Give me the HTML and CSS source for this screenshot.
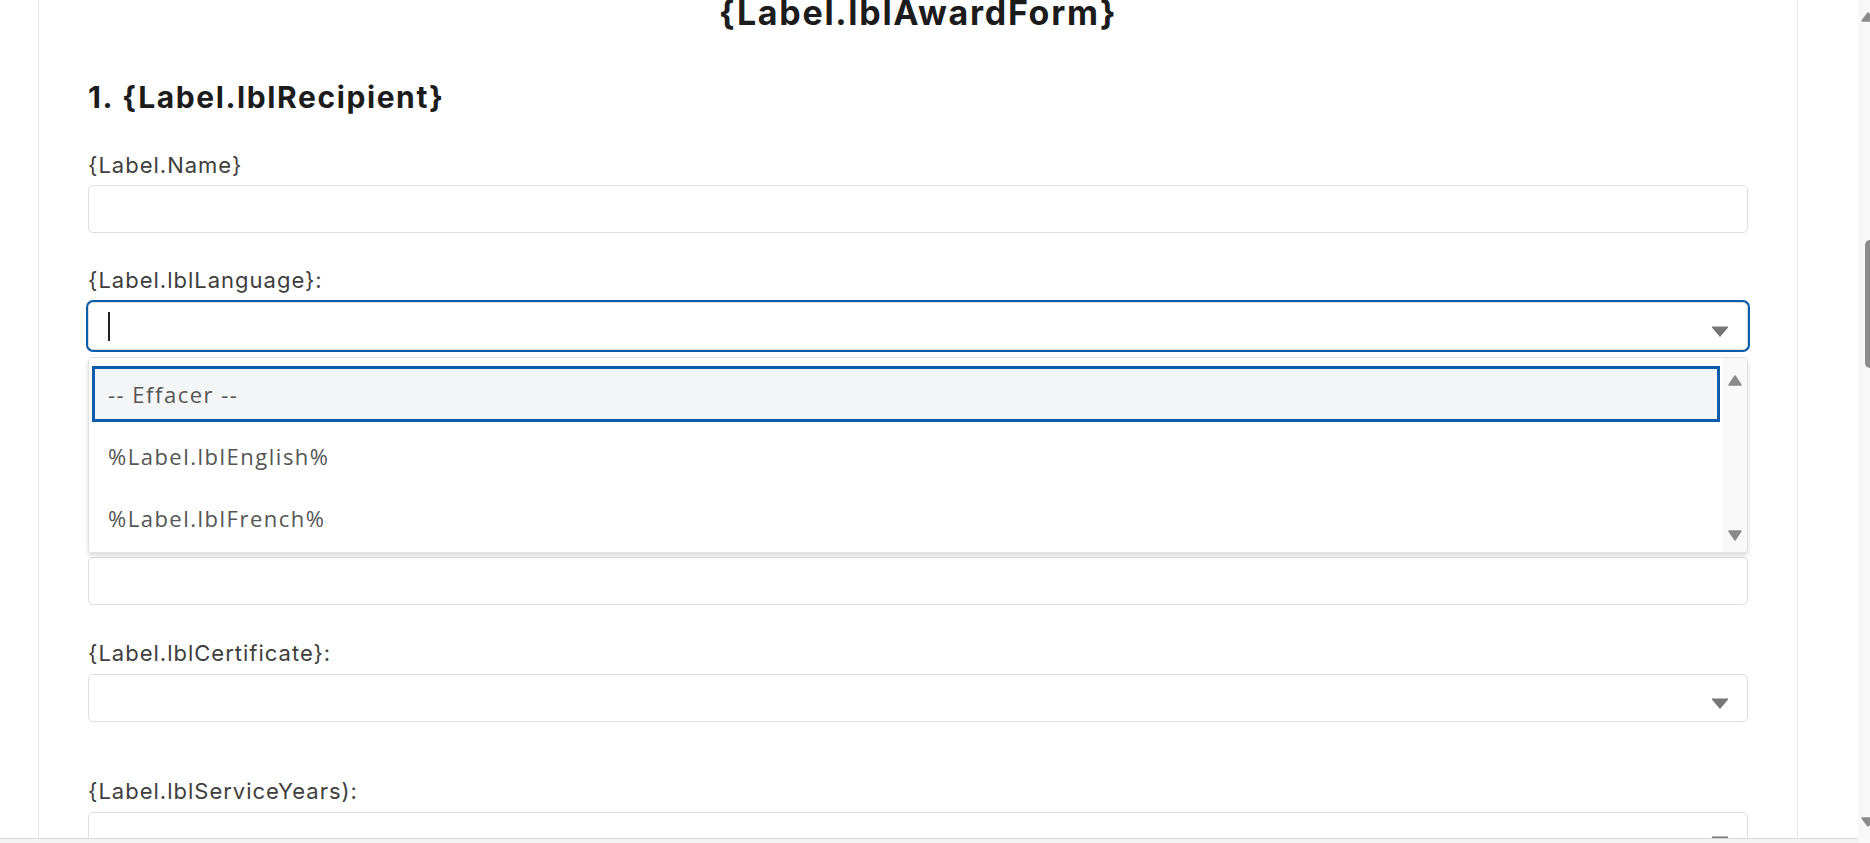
FILE: index.html
```html
<!DOCTYPE html>
<html lang="fr">
<head>
<meta charset="utf-8">
<title>{Label.lblAwardForm}</title>
<link rel="stylesheet" href="styles.css">
</head>
<body>
<div class="page">
  <h1 class="title">{Label.lblAwardForm}</h1>
  <h2 class="section">1. {Label.lblRecipient}</h2>

  <div class="group g-name">
    <label class="lbl">{Label.Name}</label>
    <div class="field"></div>
  </div>

  <div class="group g-lang">
    <label class="lbl">{Label.lblLanguage}:</label>
    <div class="combo">
      <div class="field select focused">
        <span class="caret"></span>
        <svg class="arrow" width="18" height="11" viewBox="0 0 18 11"><polygon points="1,1 17,1 9,10.5" fill="#767676" stroke="#767676" stroke-width="1" stroke-linejoin="round"/></svg>
      </div>
      <div class="menu">
        <div class="options">
          <div class="opt active">-- Effacer --</div>
          <div class="opt">%Label.lblEnglish%</div>
          <div class="opt">%Label.lblFrench%</div>
        </div>
        <div class="menu-scroll">
          <svg width="14" height="11" viewBox="0 0 14 11"><polygon points="7,1 13,10 1,10" fill="#8a8a8a" stroke="#8a8a8a" stroke-width="1.5" stroke-linejoin="round"/></svg>
          <svg width="14" height="11" viewBox="0 0 14 11"><polygon points="1,1 13,1 7,10" fill="#8a8a8a" stroke="#8a8a8a" stroke-width="1.5" stroke-linejoin="round"/></svg>
        </div>
      </div>
    </div>
  </div>

  <div class="group g-hidden">
    <div class="field"></div>
  </div>

  <div class="group g-cert">
    <label class="lbl">{Label.lblCertificate}:</label>
    <div class="field select">
      <svg class="arrow" width="18" height="11" viewBox="0 0 18 11"><polygon points="1,1 17,1 9,10.5" fill="#767676" stroke="#767676" stroke-width="1" stroke-linejoin="round"/></svg>
    </div>
  </div>

  <div class="group g-years">
    <label class="lbl">{Label.lblServiceYears):</label>
    <div class="field select">
      <svg class="arrow" width="18" height="11" viewBox="0 0 18 11"><polygon points="1,1 17,1 9,10.5" fill="#767676" stroke="#767676" stroke-width="1" stroke-linejoin="round"/></svg>
    </div>
  </div>
</div>

<div class="vscroll">
  <svg class="vs-up" width="14" height="10" viewBox="0 0 14 10"><polygon points="7,1 13,9 1,9" fill="#8a8a8a" stroke="#8a8a8a" stroke-width="1.5" stroke-linejoin="round"/></svg>
  <div class="vs-thumb"></div>
  <svg class="vs-down" width="14" height="10" viewBox="0 0 14 10"><polygon points="1,1 13,1 7,9" fill="#8a8a8a" stroke="#8a8a8a" stroke-width="1.5" stroke-linejoin="round"/></svg>
</div>
<div class="hscroll"></div>
</body>
</html>
```

FILE: styles.css
```css
html, body {
  margin: 0;
  padding: 0;
  height: 100%;
  overflow: hidden;
  background: #ffffff;
}

body {
  font-family: "Inter", "Liberation Sans", sans-serif;
  color: #3e3e3c;
}

.page {
  box-sizing: border-box;
  width: 1760px;
  min-height: 900px;
  margin-left: 38px;
  padding: 0 49px;
  border-left: 1px solid #e6e6e6;
  border-right: 1px solid #e6e6e6;
}

.title {
  margin: -7px 0 0;
  font-size: 34px;
  line-height: 40px;
  font-weight: 700;
  letter-spacing: 1.7px;
  text-align: center;
  color: #1c1c1c;
}

.section {
  margin: 46px 0 0;
  font-size: 30px;
  line-height: 36px;
  font-weight: 700;
  letter-spacing: 1.6px;
  color: #1c1c1c;
}

.group {
  display: flex;
  flex-direction: column;
}

.lbl {
  display: block;
  font-size: 22px;
  line-height: 24px;
  letter-spacing: 1px;
  color: #3e3e3c;
}

.g-name { margin-top: 38px; }
.g-name .lbl { margin-bottom: 8px; }

.g-lang { margin-top: 35px; }
.g-lang .lbl { margin-bottom: 10px; }

.g-hidden { margin-top: 207px; }

.g-cert { margin-top: 36px; }
.g-cert .lbl { margin-bottom: 9px; }

.g-years { margin-top: 57px; }
.g-years .lbl { margin-bottom: 9px; }

.field {
  box-sizing: border-box;
  height: 48px;
  border: 1px solid #dedede;
  border-radius: 5px;
  background: #ffffff;
}

.select {
  display: flex;
  align-items: center;
  justify-content: space-between;
  padding: 10px 18px 0 19px;
}

.select .arrow {
  margin-left: auto;
  display: block;
}

.focused {
  box-shadow: 0 0 0 2px #0b5cab;
  border-color: #dcdcdc;
}

.caret {
  display: block;
  width: 2px;
  height: 29px;
  margin-top: -10px;
  background: #222222;
}

.combo {
  position: relative;
}

.menu {
  position: absolute;
  top: 55px;
  left: 0;
  right: 0;
  z-index: 5;
  box-sizing: border-box;
  height: 196px;
  display: flex;
  border: 1px solid #e2e2e2;
  border-radius: 4px;
  background: #ffffff;
  box-shadow: 0 3px 5px rgba(0, 0, 0, 0.14);
  overflow: hidden;
}

.options {
  flex: 1;
  display: flex;
  flex-direction: column;
  padding: 5px 0 3px;
}

.opt {
  box-sizing: border-box;
  height: 56px;
  margin: 3px 3px 3px 3px;
  padding-left: 13px;
  border: 3px solid transparent;
  display: flex;
  align-items: center;
  font-family: "Open Sans", "Liberation Sans", sans-serif;
  font-size: 22px;
  letter-spacing: 1.5px;
  color: #555555;
}

.opt.active {
  border-color: #0b5cab;
  background: #f4f5f7;
}

.menu-scroll {
  width: 24px;
  display: flex;
  flex-direction: column;
  align-items: center;
  justify-content: space-between;
  padding: 17px 0 11px;
  background: #f9f9f9;
}

.menu-scroll svg { display: block; }

.vscroll {
  position: fixed;
  top: 0;
  right: 0;
  bottom: 0;
  width: 12px;
  background: #f8f8f8;
}

.vs-up {
  position: absolute;
  top: 12px;
  left: 3px;
}

.vs-down {
  position: absolute;
  top: 817px;
  left: 3px;
}

.vs-thumb {
  position: absolute;
  top: 240px;
  left: 7px;
  width: 10px;
  height: 128px;
  border-radius: 5px;
  background: #8c8c8c;
}

.hscroll {
  position: fixed;
  left: 0;
  right: 12px;
  top: 838px;
  height: 5px;
  border-top: 1px solid #dcdcdc;
  background: #f3f3f3;
}
```
